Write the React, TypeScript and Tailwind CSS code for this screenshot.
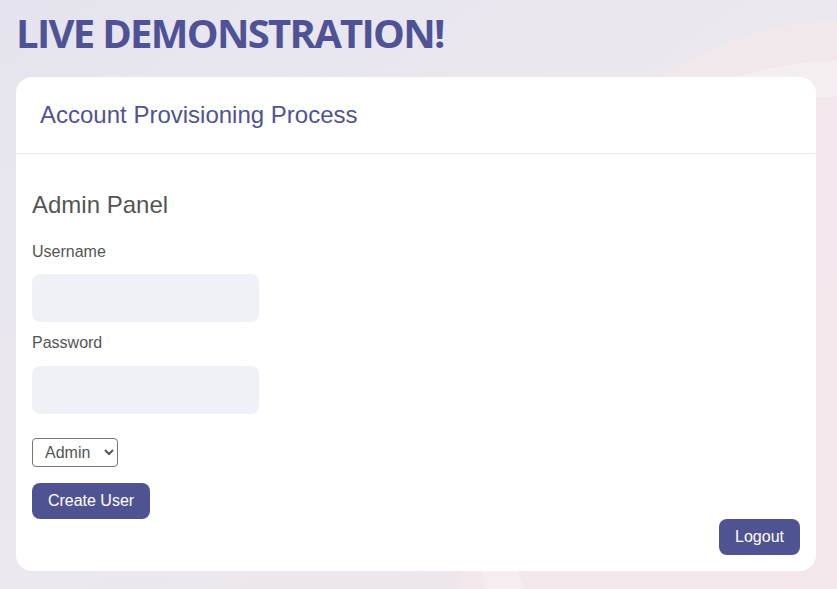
export default function App() {
  return (
    <div className="relative min-h-[589px] w-full overflow-hidden bg-gradient-to-br from-[#e5e4ee] via-[#ece8ef] to-[#efe4ea] font-['Liberation_Sans',Arial,sans-serif]">
      {/* soft background arcs */}
      <div className="pointer-events-none absolute left-[460px] top-[17px] h-[1000px] w-[820px] rounded-full bg-[#f3e7eb]/80"></div>
      <div className="pointer-events-none absolute left-[470px] top-[60px] h-[800px] w-[760px] rounded-full border-[36px] border-white/25"></div>

      <div className="relative px-4 pt-[6px] pb-[18px]">
        <h1 className="font-['Open_Sans',sans-serif] text-[40px] font-bold leading-[54px] tracking-[-1.7px] text-[#4f5395]">
          LIVE DEMONSTRATION!
        </h1>

        <div className="mt-[17px] w-[800px] rounded-2xl bg-white">
          <div className="border-b border-[#e8e8ec] px-6 pt-[23px] pb-[23px]">
            <h2 className="text-[24px] leading-[30px] text-[#4f5395]">Account Provisioning Process</h2>
          </div>

          <div className="flex flex-col px-4 pt-[36px] pb-4">
            <h3 className="text-[24px] leading-[30px] text-[#555]">Admin Panel</h3>

            <label className="mt-[22px] text-base leading-5 text-[#555]">Username</label>
            <input className="mt-[12px] h-12 w-[227px] rounded-lg bg-[#eef2f6] px-3 outline-none" />

            <label className="mt-[11px] text-base leading-5 text-[#555]">Password</label>
            <input type="password" className="mt-[13px] h-12 w-[227px] rounded-lg bg-[#eef2f6] px-3 outline-none" />

            <select className="mt-6 h-[29px] w-[86px] rounded border border-[#767676] bg-white pl-2 text-base text-[#555]">
              <option>Admin</option>
              <option>User</option>
            </select>

            <button className="mt-4 h-9 w-[118px] rounded-lg bg-[#505391] text-base text-white">Create User</button>

            <div className="flex justify-end">
              <button className="h-9 w-[81px] rounded-lg bg-[#505391] text-base text-white">Logout</button>
            </div>
          </div>
        </div>
      </div>
    </div>
  )
}
